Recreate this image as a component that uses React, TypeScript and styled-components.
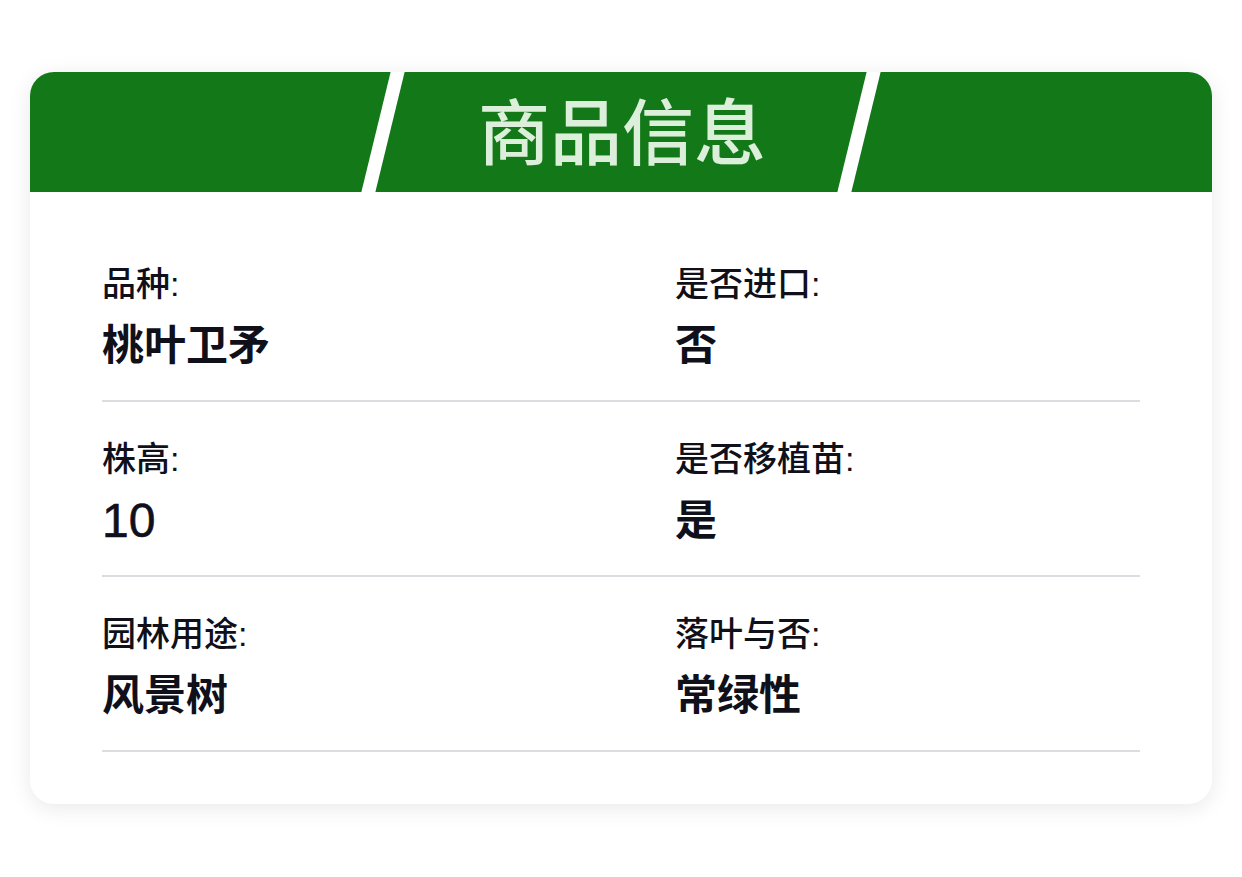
import React from 'react'
import styled, { createGlobalStyle } from 'styled-components'

const GlobalStyle = createGlobalStyle`
  html, body {
    margin: 0;
    padding: 0;
    background: #ffffff;
  }
  body {
    font-family: "Liberation Sans", "Noto Sans CJK SC", sans-serif;
    color: #10101a;
  }
`

const SKEW = 13.7

const info = [
  [
    { label: '品种', value: '桃叶卫矛' },
    { label: '是否进口', value: '否' },
  ],
  [
    { label: '株高', value: '10', numeric: true },
    { label: '是否移植苗', value: '是' },
  ],
  [
    { label: '园林用途', value: '风景树' },
    { label: '落叶与否', value: '常绿性' },
  ],
]

export default () => {
  return (
    <Page>
      <GlobalStyle />
      <Card>
        <Header>
          <TitleBox>
            <Title>商品信息</Title>
          </TitleBox>
        </Header>
        <Body>
          {info.map((row, i) => (
            <Row key={i}>
              {row.map(cell => (
                <Cell key={cell.label}>
                  <Label>{cell.label}:</Label>
                  <Value $numeric={cell.numeric}>{cell.value}</Value>
                </Cell>
              ))}
            </Row>
          ))}
        </Body>
      </Card>
    </Page>
  )
}

const Page = styled.div`
  padding: 72px 30px;
`

const Card = styled.div`
  background: #ffffff;
  border-radius: 24px;
  overflow: hidden;
  box-shadow: 0 4px 22px rgba(0, 0, 0, 0.09);
`

const Header = styled.div`
  height: 120px;
  background: #137918;
  display: flex;
  justify-content: center;
  overflow: hidden;
`

const TitleBox = styled.div`
  box-sizing: border-box;
  width: 490px;
  height: 100%;
  border-left: 14px solid #ffffff;
  border-right: 14px solid #ffffff;
  transform: skewX(-${SKEW}deg);
  display: flex;
  align-items: center;
  justify-content: center;
`

const Title = styled.h1`
  margin: 0 0 8px;
  transform: skewX(${SKEW}deg);
  font-family: "Noto Sans CJK SC", sans-serif;
  font-size: 72px;
  font-weight: 500;
  line-height: 1;
  color: #dcefda;
`

const Body = styled.div`
  padding: 35px 72px 52px;
`

const Row = styled.div`
  display: grid;
  grid-template-columns: 573px 1fr;
  padding: 40px 0 33px;
  border-bottom: 2px solid #dcdce1;
`

const Cell = styled.div`
  display: flex;
  flex-direction: column;
  gap: 24px;
`

const Label = styled.div`
  font-size: 34px;
  line-height: 34px;
  font-weight: 500;
`

const Value = styled.div<{ $numeric?: boolean }>`
  font-size: ${p => (p.$numeric ? '48px' : '42px')};
  line-height: 42px;
  font-weight: ${p => (p.$numeric ? 400 : 700)};
  -webkit-text-stroke: ${p => (p.$numeric ? '0.6px' : '0')};
`
